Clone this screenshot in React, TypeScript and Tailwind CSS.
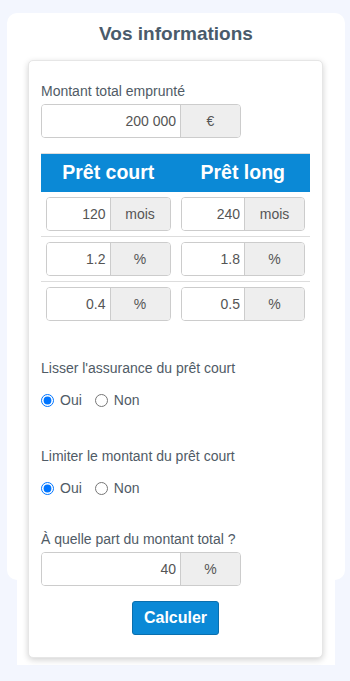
import { useState } from 'react'

const font = { fontFamily: '"Liberation Sans", Arial, sans-serif' }

function InputGroup({ value, unit, className = '' }: { value: string; unit: string; className?: string }) {
  return (
    <div className={`flex h-[34px] rounded-[4px] border border-[#ccc] overflow-hidden ${className}`}>
      <input
        defaultValue={value}
        className="min-w-0 flex-1 bg-white pr-[4px] text-right text-[14px] text-[#555] outline-none"
      />
      <span className="flex w-[60px] shrink-0 items-center justify-center border-l border-[#ccc] bg-[#eee] text-[14px] text-[#555]">
        {unit}
      </span>
    </div>
  )
}

function RadioRow({ name }: { name: string }) {
  const [val, setVal] = useState('oui')
  return (
    <div className="flex h-[20px] items-center text-[14px] text-[#505b66]">
      <label className="flex items-center">
        <input
          type="radio"
          name={name}
          checked={val === 'oui'}
          onChange={() => setVal('oui')}
          className="m-0 h-[13px] w-[13px]"
        />
        <span className="ml-[6px]">Oui</span>
      </label>
      <label className="ml-[13px] flex items-center">
        <input
          type="radio"
          name={name}
          checked={val === 'non'}
          onChange={() => setVal('non')}
          className="m-0 h-[13px] w-[13px]"
        />
        <span className="ml-[6px]">Non</span>
      </label>
    </div>
  )
}

const rows = [
  { court: '120', long: '240', unit: 'mois' },
  { court: '1.2', long: '1.8', unit: '%' },
  { court: '0.4', long: '0.5', unit: '%' },
]

export default function App() {
  return (
    <div className="min-h-[681px] bg-[#f3f6fe] pt-[13px]" style={font}>
      <div className="ml-[7px] h-[567px] w-[338px] rounded-[10px] bg-white">
        <div className="mx-[10px] bg-white pb-[7px]">
          <h2 className="pt-[10px] text-center text-[19px] leading-[22px] font-bold text-[#4a5b6b]">
            Vos informations
          </h2>

          {/* Card */}
          <div className="mt-[15px] ml-[11px] w-[295px] rounded-[5px] border border-[#e6e6e6] bg-white px-[12px] pt-[20px] pb-[22px] shadow-[0_2px_6px_rgba(0,0,0,0.18)]">
            <div className="text-[14px] leading-[20px] text-[#505b66]">Montant total emprunté</div>
            <InputGroup value="200 000" unit="€" className="mt-[3px] w-[200px]" />

            {/* Table */}
            <div className="mt-[15px] border-t border-[#ddd]">
              <div className="grid h-[38px] grid-cols-2 items-center bg-[#0b89d6] text-center text-[19.5px] font-bold text-white">
                <div>Prêt court</div>
                <div>Prêt long</div>
              </div>
              {rows.map((r, i) => (
                <div key={i} className={`grid grid-cols-2 ${i > 0 ? 'border-t border-[#ddd]' : ''}`}>
                  <div className="p-[5px]">
                    <InputGroup value={r.court} unit={r.unit} />
                  </div>
                  <div className="p-[5px]">
                    <InputGroup value={r.long} unit={r.unit} />
                  </div>
                </div>
              ))}
            </div>

            <div className="mt-[32px] text-[14px] leading-[20px] text-[#505b66]">Lisser l'assurance du prêt court</div>
            <div className="mt-[12px]">
              <RadioRow name="lisser" />
            </div>

            <div className="mt-[36px] text-[14px] leading-[20px] text-[#505b66]">Limiter le montant du prêt court</div>
            <div className="mt-[12px]">
              <RadioRow name="limiter" />
            </div>

            <div className="mt-[31px] text-[14px] leading-[20px] text-[#505b66]">À quelle part du montant total ?</div>
            <InputGroup value="40" unit="%" className="mt-[3px] w-[200px]" />

            <div className="mt-[15px] flex justify-center">
              <button className="h-[34px] rounded-[3px] border border-[#0a6fae] bg-[#0b89d6] px-[11px] text-[16px] font-bold text-white">
                Calculer
              </button>
            </div>
          </div>
        </div>
      </div>
    </div>
  )
}
